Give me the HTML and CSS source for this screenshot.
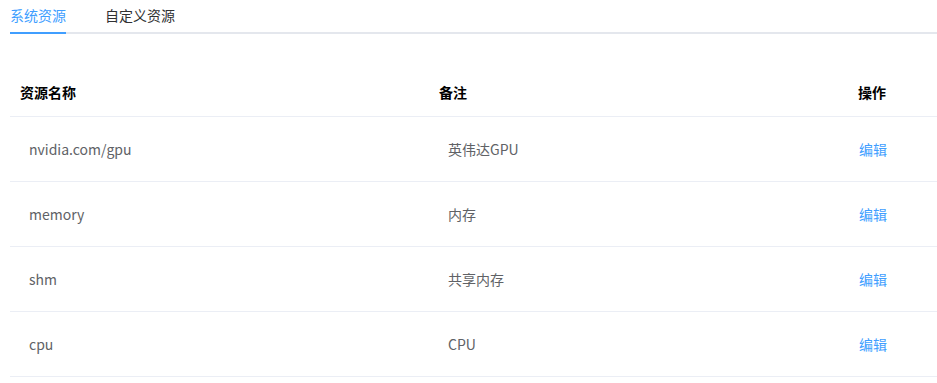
FILE: index.html
```html
<!DOCTYPE html>
<html lang="zh-CN">
<head>
  <meta charset="UTF-8" />
  <meta name="viewport" content="width=device-width, initial-scale=1" />
  <title>资源管理</title>
  <link rel="stylesheet" href="styles.css">
</head>
<body>

  <div class="page">
    <div class="tabs">
      <div class="tab active">系统资源</div>
      <div class="tab">自定义资源</div>
    </div>

    <table class="res-table">
      <colgroup>
        <col class="col-name">
        <col class="col-note">
        <col class="col-op">
      </colgroup>
      <thead>
        <tr>
          <th>资源名称</th>
          <th>备注</th>
          <th>操作</th>
        </tr>
      </thead>
      <tbody>
        <tr>
          <td>nvidia.com/gpu</td>
          <td>英伟达GPU</td>
          <td class="op"><a href="#">编辑</a></td>
        </tr>
        <tr>
          <td>memory</td>
          <td>内存</td>
          <td class="op"><a href="#">编辑</a></td>
        </tr>
        <tr>
          <td>shm</td>
          <td>共享内存</td>
          <td class="op"><a href="#">编辑</a></td>
        </tr>
        <tr>
          <td>cpu</td>
          <td>CPU</td>
          <td class="op"><a href="#">编辑</a></td>
        </tr>
      </tbody>
    </table>
  </div>

</body>
</html>
```

FILE: styles.css
```css
body {
  margin: 0;
  font-family: "Noto Sans CJK SC", "Open Sans", sans-serif;
  font-size: 14px;
  color: #606266;
  background: #fff;
}
.page {
  padding-left: 10px;
}
.tabs {
  display: flex;
  gap: 39px;
  border-bottom: 2px solid #e4e7ed;
  height: 32px;
}
.tab {
  line-height: 30px;
  height: 32px;
  color: #303133;
  box-sizing: border-box;
}
.tab.active {
  color: #409eff;
  border-bottom: 2px solid #409eff;
  margin-bottom: -2px;
  height: 34px;
}
.res-table {
  margin-top: 34px;
  width: 927px;
  border-collapse: collapse;
  table-layout: fixed;
}
.col-name,
.col-note {
  width: 419px;
}
.col-op {
  width: 89px;
}
.res-table th {
  text-align: left;
  font-weight: bold;
  color: #000;
  height: 48px;
  padding: 0 10px;
  border-bottom: 1px solid #ebeef5;
}
.res-table td {
  height: 64px;
  padding: 0 19px;
  border-bottom: 1px solid #ebeef5;
}
.res-table td.op {
  padding-left: 11px;
}
.op a {
  color: #409eff;
  text-decoration: none;
}
```
